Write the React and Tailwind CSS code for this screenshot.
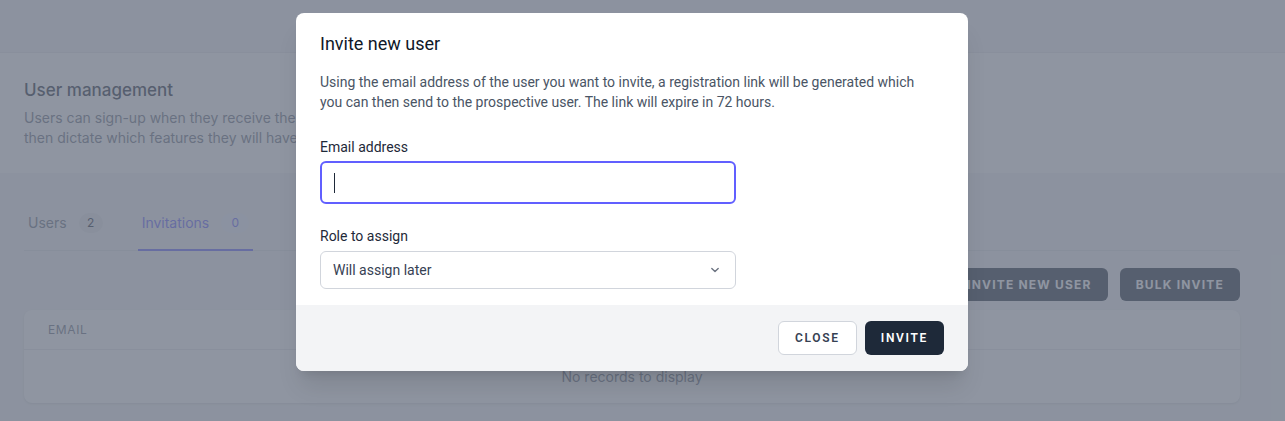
import React from "react";

export default function App() {
  return (
    <div className="relative h-[421px] w-[1285px] overflow-hidden bg-gray-100 font-['Inter',sans-serif]">
      {/* Page underneath */}
      <div className="h-[53px] border-b border-gray-200 bg-gray-100"></div>
      <div className="h-[120px] bg-white pl-6 pr-[45px] pt-[25px]">
        <h2 className="text-[17px] leading-[24px] font-medium text-gray-800">User management</h2>
        <p className="mt-[6px] text-sm leading-5 text-gray-500">
          Users can sign-up when they receive their unique registration link. The role you assign to them will
          <br />
          then dictate which features they will have access to.
        </p>
      </div>
      <div className="pl-6 pr-[45px] pt-[40px]">
        <div className="flex gap-[31px] border-b border-gray-300/60">
          <div className="flex items-center gap-3 px-1 pb-[17px] text-sm text-gray-500">
            Users
            <span className="flex h-5 min-w-6 items-center justify-center rounded-full bg-gray-200 px-2 text-xs text-gray-800">2</span>
          </div>
          <div className="-mb-px flex items-center gap-3 border-b-2 border-indigo-500 px-1 pb-[16px] text-sm text-indigo-500">
            Invitations
            <span className="flex h-5 min-w-7 items-center justify-center rounded-full bg-indigo-50 px-2 text-xs text-indigo-500">0</span>
          </div>
        </div>
        <div className="mt-[17px] flex justify-end gap-3">
          <button className="h-[33px] rounded-md bg-gray-800 px-[16px] text-xs font-bold tracking-[0.1em] text-white">
            INVITE NEW USER
          </button>
          <button className="h-[33px] rounded-md bg-gray-800 px-[16px] text-xs font-bold tracking-[0.1em] text-white">
            BULK INVITE
          </button>
        </div>
        <div className="mt-[9px] rounded-lg bg-white shadow-sm">
          <div className="flex h-[40px] items-center border-b border-gray-200 px-6 text-xs tracking-wider text-gray-500">EMAIL</div>
          <div className="flex h-[53px] items-center justify-center text-sm text-gray-500">No records to display</div>
        </div>
      </div>

      {/* Overlay */}
      <div className="absolute inset-0 bg-gray-500/75"></div>

      {/* Modal */}
      <div className="absolute left-[296px] top-[13px] w-[672px] overflow-hidden rounded-lg bg-white shadow-xl font-['Roboto',sans-serif]">
        <div className="px-6 pt-[19px] pb-4">
          <h3 className="text-[18px] leading-[24px] text-gray-900">Invite new user</h3>
          <p className="mt-[16px] w-[604px] text-sm leading-5 text-gray-600">
            Using the email address of the user you want to invite, a registration link will be generated which
            you can then send to the prospective user. The link will expire in 72 hours.
          </p>
          <label className="mt-[25px] block text-sm leading-5 text-gray-800">Email address</label>
          <div className="mt-[4px] flex h-[43px] w-[416px] items-center rounded-md border-2 border-indigo-500 px-3">
            <span className="h-[20px] w-px bg-gray-800"></span>
          </div>
          <label className="mt-[22px] block text-sm leading-5 text-gray-800">Role to assign</label>
          <div className="mt-[5px] flex h-[38px] w-[416px] items-center justify-between rounded-md border border-gray-300 pl-3 pr-3 text-sm text-gray-700">
            <span>Will assign later</span>
            <svg width="16" height="16" viewBox="0 0 20 20" fill="none" stroke="#6b7280" strokeWidth="1.7" strokeLinecap="round" strokeLinejoin="round">
              <path d="M6 8l4 4 4-4" />
            </svg>
          </div>
        </div>
        <div className="flex h-[66px] items-center justify-end gap-2 bg-gray-100 px-6">
          <button className="h-[34px] rounded-md border border-gray-300 bg-white px-[16px] text-xs font-semibold tracking-[0.14em] text-gray-700">
            CLOSE
          </button>
          <button className="h-[34px] rounded-md bg-gray-800 px-[16px] text-xs font-semibold tracking-[0.14em] text-white">
            INVITE
          </button>
        </div>
      </div>
    </div>
  );
}
